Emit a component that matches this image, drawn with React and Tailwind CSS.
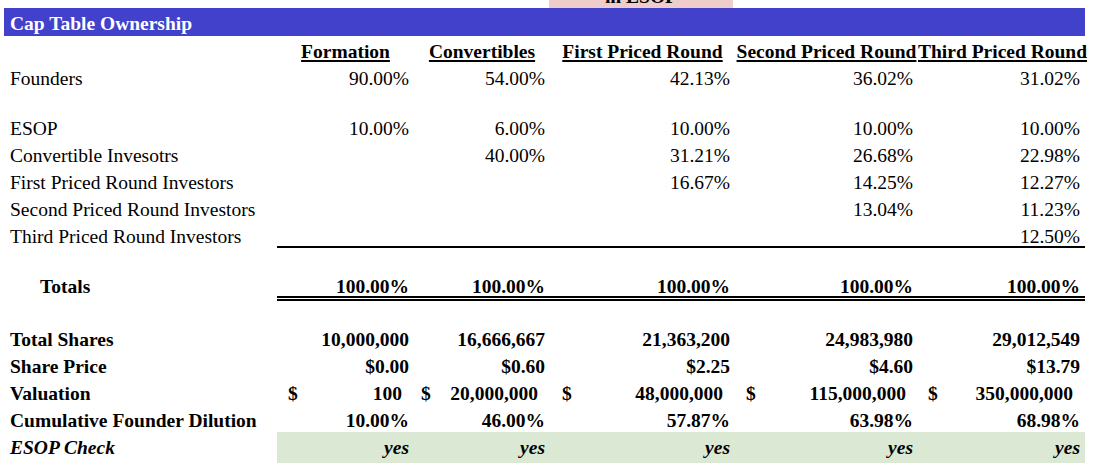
import React from 'react';

const cols = 'grid grid-cols-[273px_137px_136px_185px_183px_167px] ml-[4px] w-[1081px]';

const headers = ['Formation', 'Convertibles', 'First Priced Round', 'Second Priced Round', 'Third Priced Round'];

const ownership = [
  ['ESOP', ['10.00%', '6.00%', '10.00%', '10.00%', '10.00%']],
  ['Convertible Invesotrs', ['', '40.00%', '31.21%', '26.68%', '22.98%']],
  ['First Priced Round Investors', ['', '', '16.67%', '14.25%', '12.27%']],
  ['Second Priced Round Investors', ['', '', '', '13.04%', '11.23%']],
];

const summary = [
  ['Total Shares', ['10,000,000', '16,666,667', '21,363,200', '24,983,980', '29,012,549']],
  ['Share Price', ['$0.00', '$0.60', '$2.25', '$4.60', '$13.79']],
];

const valuation = ['100', '20,000,000', '48,000,000', '115,000,000', '350,000,000'];
// $ sign inset differs per column (accounting format)
const dollarPad = ['pl-[11px]', 'pl-[7px]', 'pl-[12px]', 'pl-[11px]', 'pl-[10px]'];

const Row = ({ label, values, bold, className = 'h-[27px] leading-[31px]', labelClass = 'pl-[6px]' }) => (
  <div className={`${cols} ${bold ? 'font-bold' : ''} ${className}`}>
    <div className={`${labelClass} whitespace-nowrap`}>{label}</div>
    {values.map((v, i) => (
      <div key={i} className="text-right pr-[5px] whitespace-nowrap">{v}</div>
    ))}
  </div>
);

export default function App() {
  return (
    <div
      className="w-[1094px] h-[472px] bg-white text-black overflow-hidden text-[19.5px]"
      style={{ fontFamily: '"Liberation Serif", "Times New Roman", serif' }}
    >
      {/* clipped cell from the row above */}
      <div className="ml-[549px] w-[184px] h-[8px] bg-[#efcdcb] overflow-hidden text-center font-bold">
        <div className="leading-[19.5px] -mt-[13px]">in ESOP</div>
      </div>

      {/* title bar */}
      <div className="ml-[4px] w-[1081px] h-[28px] bg-[#4141cc] text-white font-bold pl-[6px] leading-[31px] whitespace-nowrap">
        Cap Table Ownership
      </div>

      {/* column headers */}
      <div className={`${cols} h-[27px] leading-[31px] font-bold`}>
        <div />
        {headers.map((h) => (
          <div key={h} className="text-center whitespace-nowrap">
            <span className="underline underline-offset-[2px] decoration-[length:1.5px]">{h}</span>
          </div>
        ))}
      </div>

      <Row label="Founders" values={['90.00%', '54.00%', '42.13%', '36.02%', '31.02%']} />
      <div className="h-[23px]" />

      {ownership.map(([label, values]) => (
        <Row key={label} label={label} values={values} />
      ))}
      <Row label="Third Priced Round Investors" values={['', '', '', '', '12.50%']} className="h-[25px] leading-[31px]" />
      <div className="ml-[277px] w-[808px] h-[2px] bg-black" />

      <div className="h-[20px]" />
      <Row label="Totals" values={Array(5).fill('100.00%')} bold labelClass="pl-[36px]" className="h-[28px] leading-[37px]" />
      <div className="ml-[277px] w-[808px]">
        <div className="h-[2px] bg-black" />
        <div className="h-[1px]" />
        <div className="h-[2px] bg-black" />
      </div>

      <div className="h-[23px]" />
      {summary.map(([label, values]) => (
        <Row key={label} label={label} values={values} bold />
      ))}

      <div className={`${cols} h-[27px] leading-[31px] font-bold`}>
        <div className="pl-[6px]">Valuation</div>
        {valuation.map((v, i) => (
          <div key={i} className={`flex justify-between whitespace-nowrap pr-[12px] ${dollarPad[i]}`}>
            <span>$</span>
            <span>{v}</span>
          </div>
        ))}
      </div>

      <Row label="Cumulative Founder Dilution" values={['10.00%', '46.00%', '57.87%', '63.98%', '68.98%']} bold />

      <div className={`${cols} h-[27px] leading-[31px] font-bold italic`}>
        <div className="pl-[6px] whitespace-nowrap">ESOP Check</div>
        {Array(5).fill('yes').map((v, i) => (
          <div key={i} className="text-right pr-[5px] bg-[#dbe8d4]">{v}</div>
        ))}
      </div>
    </div>
  );
}
